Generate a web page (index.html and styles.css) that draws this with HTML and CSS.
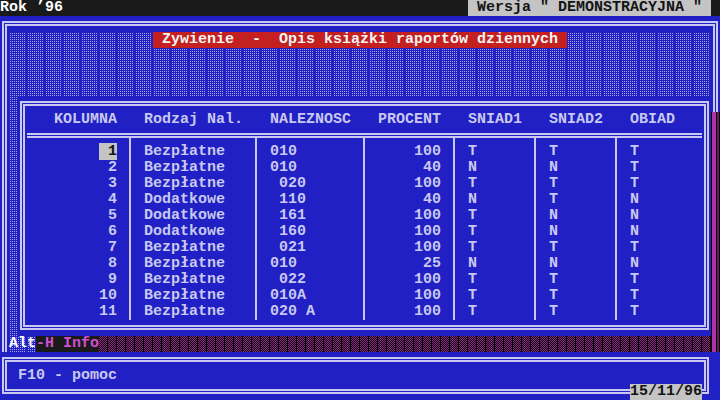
FILE: index.html
```html
<!DOCTYPE html>
<html lang="pl">
<head>
<meta charset="utf-8">
<title>Zywienie - Opis książki raportów dziennych</title>
<link rel="stylesheet" href="styles.css">
</head>
<body>
<div class="screen">
  <header class="topbar">
    <span class="year">Rok ’96</span>
    <span class="version"> Wersja " DEMONSTRACYJNA " </span>
  </header>

  <div class="outer"></div>

  <h1 class="title"> Zywienie  -  Opis książki raportów dziennych </h1>

  <section class="panel">
    <div class="panel-frame">
      <div class="cols head">
        <div class="c k">KOLUMNA</div>
        <div class="c l">Rodzaj Nal.</div>
        <div class="c l">NALEZNOSC</div>
        <div class="c p">PROCENT</div>
        <div class="c l">SNIAD1</div>
        <div class="c l">SNIAD2</div>
        <div class="c l">OBIAD</div>
      </div>
      <div class="rule"></div>
      <div class="cols body">
        <div class="c k"><span class="cur"> 1</span></div><div class="c l">Bezpłatne</div><div class="c l">010</div><div class="c p">100</div><div class="c l">T</div><div class="c l">T</div><div class="c l">T</div>
        <div class="c k">2</div><div class="c l">Bezpłatne</div><div class="c l">010</div><div class="c p">40</div><div class="c l">N</div><div class="c l">N</div><div class="c l">T</div>
        <div class="c k">3</div><div class="c l">Bezpłatne</div><div class="c l"> 020</div><div class="c p">100</div><div class="c l">T</div><div class="c l">T</div><div class="c l">T</div>
        <div class="c k">4</div><div class="c l">Dodatkowe</div><div class="c l"> 110</div><div class="c p">40</div><div class="c l">N</div><div class="c l">T</div><div class="c l">N</div>
        <div class="c k">5</div><div class="c l">Dodatkowe</div><div class="c l"> 161</div><div class="c p">100</div><div class="c l">T</div><div class="c l">N</div><div class="c l">N</div>
        <div class="c k">6</div><div class="c l">Dodatkowe</div><div class="c l"> 160</div><div class="c p">100</div><div class="c l">T</div><div class="c l">N</div><div class="c l">N</div>
        <div class="c k">7</div><div class="c l">Bezpłatne</div><div class="c l"> 021</div><div class="c p">100</div><div class="c l">T</div><div class="c l">T</div><div class="c l">T</div>
        <div class="c k">8</div><div class="c l">Bezpłatne</div><div class="c l">010</div><div class="c p">25</div><div class="c l">N</div><div class="c l">N</div><div class="c l">N</div>
        <div class="c k">9</div><div class="c l">Bezpłatne</div><div class="c l"> 022</div><div class="c p">100</div><div class="c l">T</div><div class="c l">T</div><div class="c l">T</div>
        <div class="c k">10</div><div class="c l">Bezpłatne</div><div class="c l">010A</div><div class="c p">100</div><div class="c l">T</div><div class="c l">T</div><div class="c l">T</div>
        <div class="c k">11</div><div class="c l">Bezpłatne</div><div class="c l">020 A</div><div class="c p">100</div><div class="c l">T</div><div class="c l">T</div><div class="c l">T</div>
      </div>
    </div>
  </section>

  <div class="shadow-right"></div>

  <div class="status"><span class="alt"> Alt</span><span class="hot">-H Info</span><span class="shade"></span></div>

  <footer class="footer"><span class="help"> F10 - pomoc</span></footer>

  <div class="date">15/11/96</div>
</div>
</body>
</html>
```
FILE: styles.css
```css
:root {
  --blue: #2020c4;
  --fg: #c8c8f0;
  --line: #c8c8f0;
  --mag: #b030a8;
  --shade-mag: #8c2482;
  --gray: #c4c4c4;
}

* { box-sizing: border-box; }

html, body {
  margin: 0;
  padding: 0;
  background: #000;
}

body {
  width: 720px;
  height: 400px;
  overflow: hidden;
}

.screen {
  display: grid;
  grid-template-columns: repeat(80, 9px);
  grid-template-rows: repeat(25, 16px);
  width: 720px;
  height: 400px;
  background: var(--blue);
  color: var(--fg);
  font: bold 15px/16px "Liberation Mono", "DejaVu Sans Mono", monospace;
}

/* top line */
.topbar {
  grid-row: 1;
  grid-column: 1 / -1;
  display: flex;
  justify-content: space-between;
  background: #1a1a1a;
  padding-right: 9px;
}
.year { color: #fff; white-space: pre; }
.version { background: var(--gray); color: #141414; white-space: pre; }

/* outer double frame with light shade fill */
.outer {
  grid-row: 2 / 23;
  grid-column: 1 / -1;
  margin: 5px 2px 0;
  border: 5px double var(--line);
  border-bottom: 0;
  padding: 6px 2px 0;
  background-color: var(--blue);
  background-image:
    linear-gradient(90deg, transparent 8px, var(--blue) 8px),
    conic-gradient(from 90deg at 1px 1px, #a4a4ec 90deg, transparent 0);
  background-size: 9px 16px, 2px 2px;
  background-origin: content-box;
  background-clip: content-box;
}

.title {
  grid-row: 3;
  grid-column: 18 / 64;
  margin: 0;
  font: inherit;
  white-space: pre;
  background: #c42020;
  color: #f4f4f4;
}

/* table window */
.panel {
  grid-row: 7 / 22;
  grid-column: 3 / 80;
  background: var(--blue);
  padding: 5px 2px 6px;
}
.panel-frame {
  height: 100%;
  border: 5px double var(--line);
  padding: 6px 2px 5px;
}

.cols {
  display: grid;
  grid-template-columns: 102px 126px 108px 90px 81px 81px 87px;
}
.c {
  white-space: pre;
  border-left: 2px solid transparent;
}
.c.k {
  border-left: 0;
  text-align: right;
  padding-right: 12px;
}
.c.p {
  text-align: right;
  padding-right: 12px;
}
.c.l { padding-left: 13px; }

.body .c:not(.k) { border-left-color: var(--line); }
.body .c:nth-child(-n+7) { padding-top: 6px; }

.rule {
  margin-top: 5px;
  border-top: 5px double var(--line);
}

.cur {
  background: var(--gray);
  color: #141414;
}

/* window shadow */
.shadow-right {
  grid-row: 8 / 23;
  grid-column: 80 / 81;
  background: #000 linear-gradient(90deg,
    transparent 1px, var(--mag) 1px 5px,
    transparent 5px 6px, #6a1a62 6px 8px,
    transparent 8px);
}

.status {
  grid-row: 22;
  grid-column: 1 / 80;
  display: flex;
}
.alt { color: #fff; white-space: pre; }
.hot { background: #1a1a1a; color: #d050d0; white-space: pre; }
.shade {
  flex: 1;
  background-color: #120410;
  background-image:
    linear-gradient(90deg, transparent 8px, #000 8px),
    conic-gradient(var(--shade-mag) 25%, transparent 0 50%, var(--shade-mag) 0 75%, transparent 0);
  background-size: 9px 16px, 2px 2px;
}

/* bottom help box */
.footer {
  grid-row: 23 / 26;
  grid-column: 1 / 80;
  margin: 5px 2px 6px;
  border: 5px double var(--line);
  padding: 6px 2px 5px;
}
.help { white-space: pre; }

.date {
  grid-row: 25;
  grid-column: 71 / 79;
  background: var(--gray);
  color: #141414;
  white-space: pre;
}
```
